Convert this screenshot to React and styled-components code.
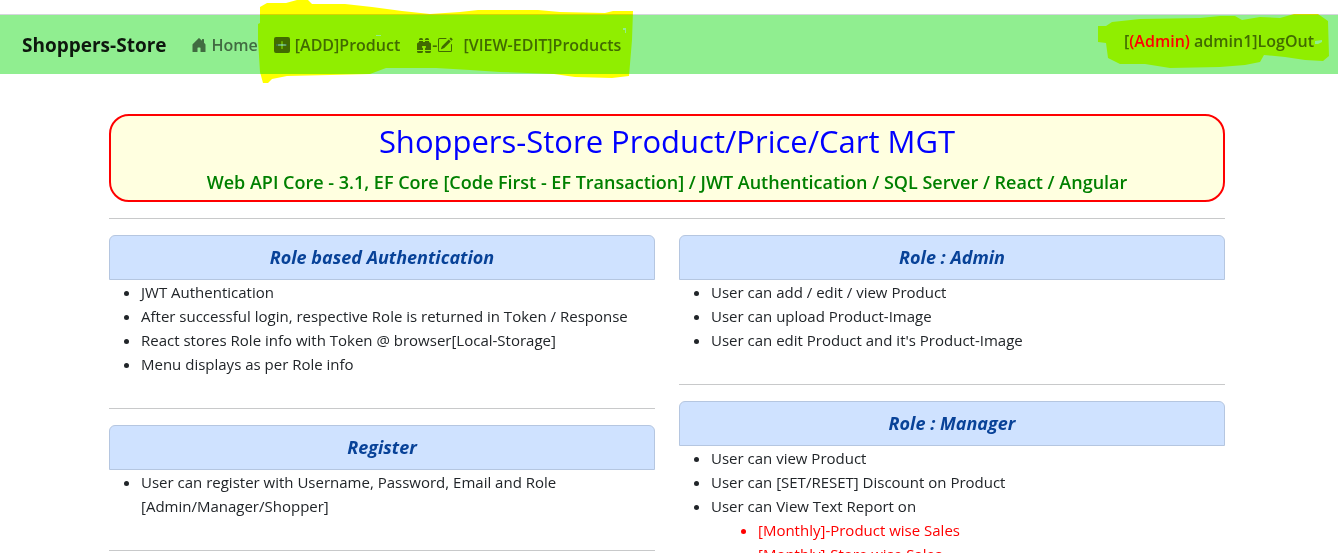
import React from "react";
import styled, { createGlobalStyle } from "styled-components";
import { BsHouseDoorFill, BsPlusSquareFill, BsBinocularsFill, BsPencilSquare } from "react-icons/bs";

const GlobalStyle = createGlobalStyle`
  *, *::before, *::after { box-sizing: border-box; }
  body {
    margin: 0;
    background: #fff;
    color: #212529;
    font-family: "Open Sans", "Noto Sans", sans-serif;
    font-size: 15px;
    line-height: 24px;
  }
`;

const Page = styled.div`
  position: relative;
  padding-top: 14px;
`;

const Navbar = styled.nav`
  display: flex;
  align-items: center;
  height: 60px;
  padding: 0 24px 0 22px;
  border-top: 1px solid #d5d5dd;
  background: lightgreen;
`;

const Brand = styled.a`
  margin-right: 24px;
  color: #0e180e;
  font-size: 19px;
  font-weight: 700;
  text-decoration: none;
  white-space: nowrap;
`;

const NavLinks = styled.div`
  display: flex;
  flex: 1;
  gap: 16px;
`;

const NavLink = styled.a`
  display: flex;
  align-items: center;
  gap: ${(p) => p.$gap || 5}px;
  color: #416b41;
  font-size: 16px;
  font-weight: 600;
  text-decoration: none;
  white-space: nowrap;
`;

const IconPair = styled.span`
  display: flex;
  align-items: center;
`;

const LogOut = styled.button`
  margin: 0 0 8px;
  padding: 0;
  border: 0;
  background: none;
  color: #416b41;
  font: inherit;
  font-size: 16px;
  font-weight: 600;
  cursor: pointer;
  white-space: nowrap;
`;

const RoleTag = styled.span`
  color: red;
`;

const Marker = styled.svg`
  position: absolute;
  top: 0;
  ${(p) => p.$side}: 0;
  fill: #ff0;
  fill-rule: evenodd;
  mix-blend-mode: multiply;
  pointer-events: none;
`;

const Main = styled.main`
  max-width: 1140px;
  margin: 0 auto;
  padding: 40px 14px 16px 10px;
`;

const Banner = styled.header`
  display: flex;
  flex-direction: column;
  gap: 10px;
  padding: 6px 16px;
  border: 2px solid red;
  border-radius: 20px;
  background: lightyellow;
  text-align: center;
`;

const Title = styled.h1`
  margin: 0;
  color: blue;
  font-size: 31px;
  font-weight: 500;
  line-height: 38px;
`;

const Subtitle = styled.p`
  margin: 0;
  color: green;
  font-size: 18px;
  font-weight: 600;
`;

const Rule = styled.hr`
  height: 1px;
  margin: 16px 0;
  border: 0;
  background: #c8c9ca;
`;

const Columns = styled.div`
  display: grid;
  grid-template-columns: 1fr 1fr;
  gap: 24px;
`;

const CardHeader = styled.h2`
  margin: 0;
  padding: 9px 16px 10px;
  border: 1px solid #b5c6e0;
  border-radius: 6px 6px 0 0;
  background: #cfe2ff;
  color: #084298;
  font-size: 18px;
  font-style: italic;
  font-weight: 700;
  text-align: center;
`;

const List = styled.ul`
  margin: 0 0 32px;
  padding-left: 32px;
`;

const SubList = styled.ul`
  margin: 0;
  padding-left: 47px;
  color: red;
  list-style: disc;
`;

function Card({ title, children }) {
  return (
    <section>
      <CardHeader>{title}</CardHeader>
      <List>{children}</List>
      <Rule />
    </section>
  );
}

export default function App() {
  return (
    <Page>
      <GlobalStyle />
      <Navbar>
        <Brand href="#">Shoppers-Store</Brand>
        <NavLinks>
          <NavLink href="#home"><BsHouseDoorFill size={16} />Home</NavLink>
          <NavLink href="#add"><BsPlusSquareFill size={16} />[ADD]Product</NavLink>
          <NavLink href="#products" $gap={10}>
            <IconPair><BsBinocularsFill size={16} />-<BsPencilSquare size={16} /></IconPair>
            [VIEW-EDIT]Products
          </NavLink>
        </NavLinks>
        <LogOut type="button">[<RoleTag>(Admin)</RoleTag> admin1]LogOut</LogOut>
      </Navbar>

      <Marker $side="left" width="640" height="90" aria-hidden="true">
        <path d="M260 7L267 3H286L297 0H308L312 4H345L372 7L402 11L430 14L460 12L478 10H538L560 12L605 13L613 11H633L632 40L629 76L612 78L575 77L554 74L500 72L470 70L436 68H386L370 74L330 75L287 76L272 79L268 83H263L260 72L258 40V24L260 23Z M276 44H287V46H276Z M376 35H381V36H376Z M623 28H626V33H625V30H623Z" />
      </Marker>
      <Marker $side="right" width="258" height="80" aria-hidden="true">
        <path d="M18 26H26L32 22L60 19L120 18L140 16H155L162 20L180 17L200 18L214 14H238L248 21L249 56L243 61L225 60L205 57L184 55L180 62L165 65L140 67L90 68L65 64L40 64L28 58L26 43L18 42Z M235 41L242 40V42L238 44H235Z" />
      </Marker>

      <Main>
        <Banner>
          <Title>Shoppers-Store Product/Price/Cart MGT</Title>
          <Subtitle>
            Web API Core - 3.1, EF Core [Code First - EF Transaction] / JWT Authentication / SQL Server / React / Angular
          </Subtitle>
        </Banner>
        <Rule />
        <Columns>
          <div>
            <Card title="Role based Authentication">
              <li>JWT Authentication</li>
              <li>After successful login, respective Role is returned in Token / Response</li>
              <li>React stores Role info with Token @ browser[Local-Storage]</li>
              <li>Menu displays as per Role info</li>
            </Card>
            <Card title="Register">
              <li>User can register with Username, Password, Email and Role [Admin/Manager/Shopper]</li>
            </Card>
          </div>
          <div>
            <Card title="Role : Admin">
              <li>User can add / edit / view Product</li>
              <li>User can upload Product-Image</li>
              <li>User can edit Product and it's Product-Image</li>
            </Card>
            <Card title="Role : Manager">
              <li>User can view Product</li>
              <li>User can [SET/RESET] Discount on Product</li>
              <li>
                User can View Text Report on
                <SubList>
                  <li>[Monthly]-Product wise Sales</li>
                  <li>[Monthly]-Store wise Sales</li>
                </SubList>
              </li>
            </Card>
          </div>
        </Columns>
      </Main>
    </Page>
  );
}
